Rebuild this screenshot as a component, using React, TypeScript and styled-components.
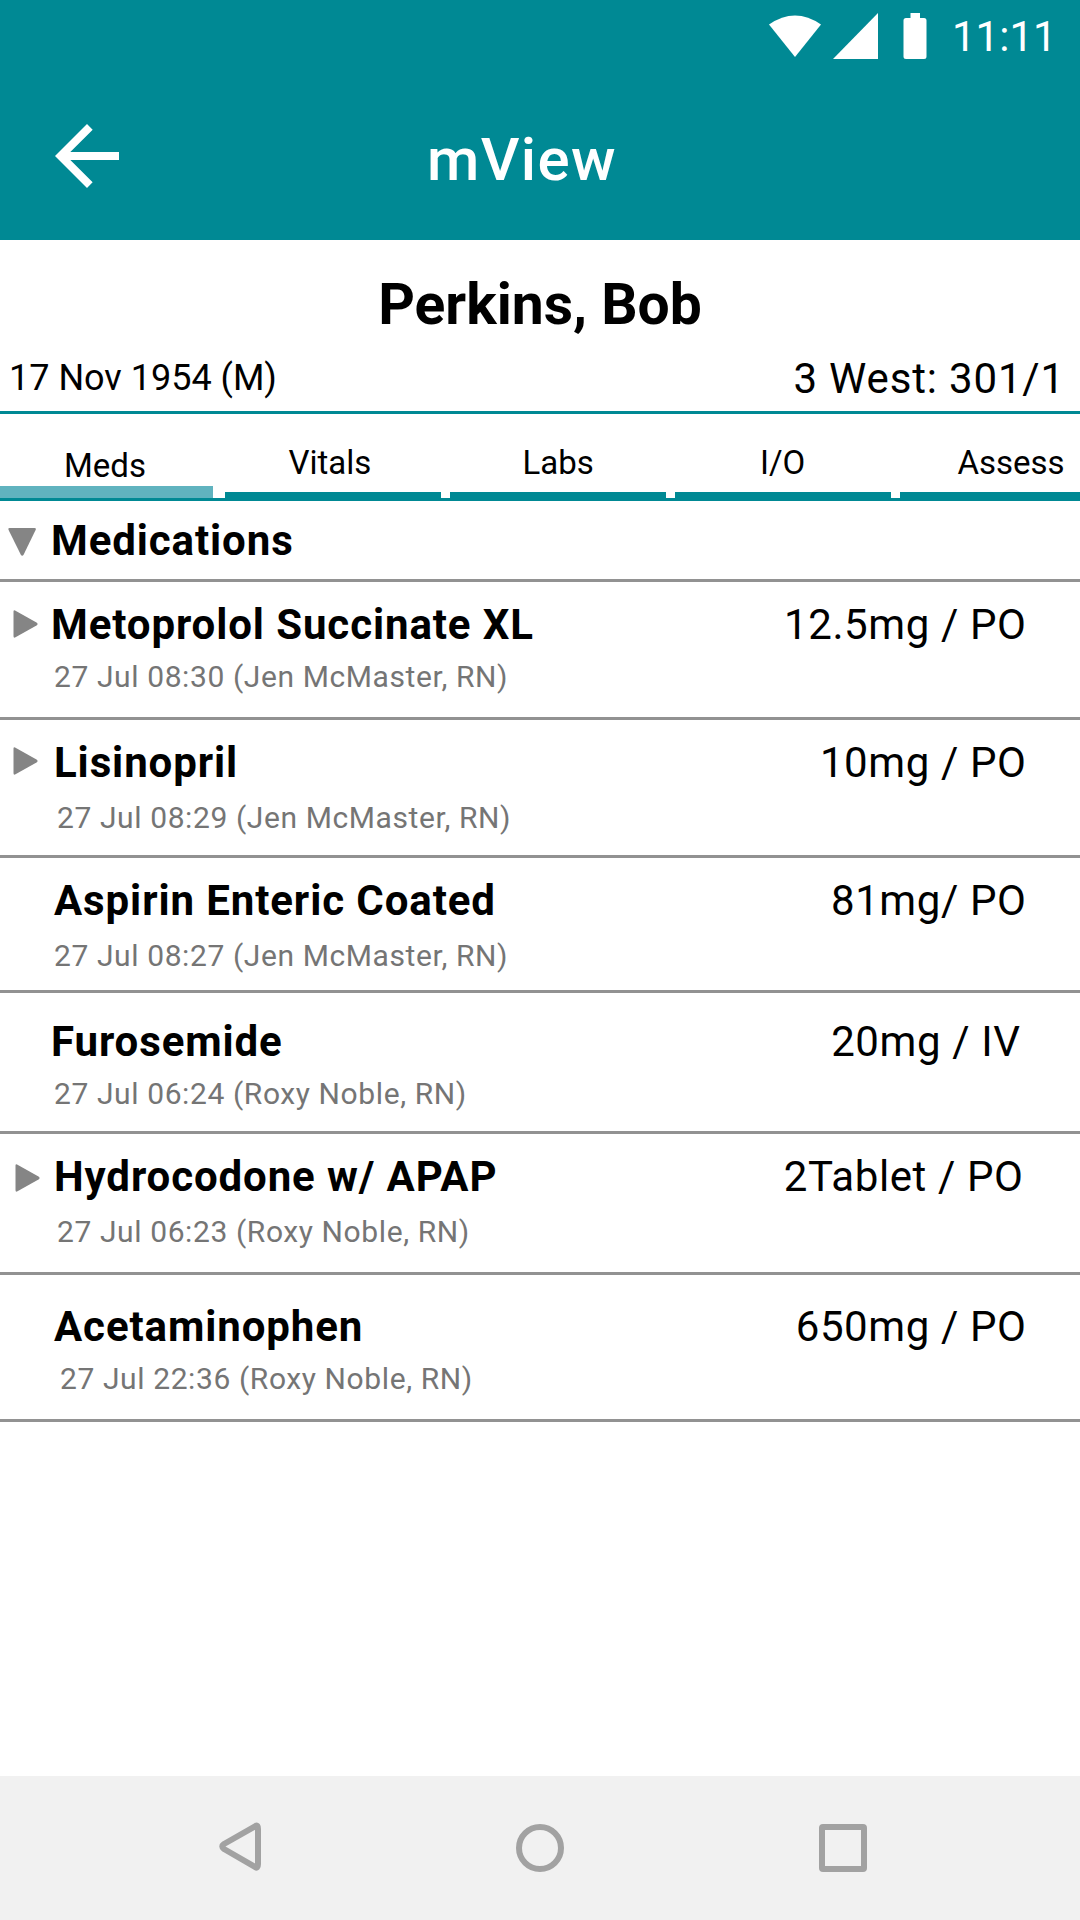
import React from 'react';
import styled, { createGlobalStyle } from 'styled-components';

const TEAL = '#008994';
const GREY = '#858585';

const GlobalStyle = createGlobalStyle`
  *, *::before, *::after { box-sizing: border-box; }
  html, body { margin: 0; padding: 0; background: #fff; }
  body { font-family: Roboto, sans-serif; color: #000; }
`;

const Screen = styled.div`
  width: 1080px;
  height: 1920px;
  display: flex;
  flex-direction: column;
  background: #fff;
  overflow: hidden;
  white-space: nowrap;
`;

const Header = styled.header`
  height: 240px;
  flex: none;
  background: ${TEAL};
  color: #fff;
`;

const StatusBar = styled.div`
  height: 72px;
  display: flex;
  align-items: flex-start;
  justify-content: flex-end;
  padding: 12px 28px 0 0;
`;

const StatusIcons = styled.svg`
  width: 160px;
  height: 48px;
  margin-right: 24px;
`;

const Clock = styled.time`
  margin-top: 1px;
  font-size: 42px;
  line-height: 48px;
  width: 100px;
`;

const TitleBar = styled.div`
  height: 168px;
  display: grid;
  grid-template-columns: 388px 1fr;
  padding: 36px 0 0 39px;
`;

const BackIcon = styled.svg`
  width: 96px;
  height: 96px;
`;

const Title = styled.h1`
  margin: 16px 0 0;
  font-size: 60px;
  font-weight: 500;
  line-height: 72px;
  letter-spacing: 1.4px;
`;

const Patient = styled.section`
  height: 174px;
  flex: none;
  border-bottom: 3px solid ${TEAL};
`;

const PatientName = styled.h2`
  margin: 0;
  padding-top: 32px;
  font-size: 57px;
  font-weight: 700;
  line-height: 66px;
  text-align: center;
`;

const PatientDetails = styled.div`
  display: flex;
  align-items: flex-start;
  justify-content: space-between;
  padding: 17px 15px 0 9px;
`;

const Birth = styled.span`
  font-size: 36px;
  line-height: 46px;
`;

const Location = styled.span`
  font-size: 42px;
  line-height: 48px;
  letter-spacing: 0.84px;
`;

const Tabs = styled.nav`
  height: 87px;
  flex: none;
  display: grid;
  grid-template-columns: 213px 216px 216px 216px 180px;
  column-gap: 9px;
  border-bottom: 3px solid ${TEAL};
`;

const Tab = styled.div<{ $active?: boolean; $inset: number }>`
  height: 84px;
  padding: ${(p) => (p.$active ? 32 : 29)}px 0 0 ${(p) => p.$inset}px;
  margin-left: ${(p) => (p.$active ? 0 : 3)}px;
  margin-right: ${(p) => (p.$active ? 0 : -3)}px;
  border-bottom: ${(p) => (p.$active ? `12px solid #60b3bf` : `6px solid ${TEAL}`)};
  font-size: 33px;
  line-height: 39px;
`;

const SectionHeader = styled.div`
  height: 81px;
  flex: none;
  display: grid;
  grid-template-columns: 51px 1fr;
  padding-top: 16px;
  border-bottom: 3px solid #929292;
`;

const Row = styled.article<{ $height: number; $top: number }>`
  height: ${(p) => p.$height}px;
  flex: none;
  display: grid;
  grid-template-columns: 51px 1fr auto;
  align-items: start;
  padding-top: ${(p) => p.$top}px;
  border-bottom: 3px solid #929292;
`;

const Arrow = styled.svg<{ $left: number; $top: number }>`
  width: 28px;
  height: 28px;
  margin: ${(p) => p.$top}px 0 0 ${(p) => p.$left}px;
`;

const Name = styled.h3<{ $indent?: number }>`
  margin: 0;
  padding-left: ${(p) => p.$indent ?? 0}px;
  font-size: 42px;
  font-weight: 700;
  line-height: 48px;
  letter-spacing: 0.9px;
`;

const Given = styled.p<{ $gap: number; $indent: number }>`
  margin: ${(p) => p.$gap}px 0 0;
  padding-left: ${(p) => p.$indent}px;
  font-size: 30px;
  line-height: 36px;
  letter-spacing: 0.6px;
  color: #757575;
`;

const Dose = styled.span<{ $right: number }>`
  padding-right: ${(p) => p.$right}px;
  font-size: 42px;
  line-height: 48px;
  letter-spacing: 0.6px;
`;

const NavBar = styled.footer`
  height: 144px;
  flex: none;
  margin-top: auto;
  background: #f1f1f1;
  display: grid;
  grid-template-columns: 300px 303px 54px;
  padding: 45px 0 0 213px;
`;

const NavIcon = styled.svg`
  width: 54px;
  height: 54px;
  fill: none;
  stroke: #a2a2a2;
  stroke-width: 6;
  stroke-linejoin: round;
`;

interface Medication {
  name: string;
  given: string;
  dose: string;
  height: number;
  top: number;
  gap: number;
  nameIndent: number;
  givenIndent: number;
  doseRight: number;
  arrow?: [number, number];
}

const medications: Medication[] = [
  { name: 'Metoprolol Succinate XL', given: '27 Jul 08:30 (Jen McMaster, RN)', dose: '12.5mg / PO', height: 138, top: 19, gap: 10, nameIndent: 0, givenIndent: 3, doseRight: 53.5, arrow: [12, 9] },
  { name: 'Lisinopril', given: '27 Jul 08:29 (Jen McMaster, RN)', dose: '10mg / PO', height: 138, top: 19, gap: 13, nameIndent: 3, givenIndent: 6, doseRight: 53.5, arrow: [12, 7.5] },
  { name: 'Aspirin Enteric Coated', given: '27 Jul 08:27 (Jen McMaster, RN)', dose: '81mg/ PO', height: 135, top: 19, gap: 13, nameIndent: 3, givenIndent: 3, doseRight: 53.5 },
  { name: 'Furosemide', given: '27 Jul 06:24 (Roxy Noble, RN)', dose: '20mg / IV', height: 141, top: 25, gap: 10, nameIndent: 0, givenIndent: 3, doseRight: 59.5 },
  { name: 'Hydrocodone w/ APAP', given: '27 Jul 06:23 (Roxy Noble, RN)', dose: '2Tablet / PO', height: 141, top: 19, gap: 13, nameIndent: 3, givenIndent: 6, doseRight: 56.5, arrow: [13.5, 10.5] },
  { name: 'Acetaminophen', given: '27 Jul 22:36 (Roxy Noble, RN)', dose: '650mg / PO', height: 147, top: 28, gap: 10, nameIndent: 3, givenIndent: 9, doseRight: 53.5 },
];

const tabs = [
  { label: 'Meds', inset: 64, active: true },
  { label: 'Vitals', inset: 63.5 },
  { label: 'Labs', inset: 72.5 },
  { label: 'I/O', inset: 85 },
  { label: 'Assess', inset: 57.5 },
];

export default function App() {
  return (
    <>
      <GlobalStyle />
      <Screen>
        <Header>
          <StatusBar>
            <StatusIcons viewBox="0 0 160 48" fill="#fff">
              <path d="M1 12.5Q27-5.500 53 12.500L27 45Z" />
              <path d="M65 47L110 1V47Z" />
              <path d="M142.500 1H152V6H156Q158.500 6 158.500 8.500V44.500Q158.500 47 156 47H138Q135.500 47 135.500 44.500V8.500Q135.500 6 138 6H142.500Z" />
            </StatusIcons>
            <Clock>11:11</Clock>
          </StatusBar>
          <TitleBar>
            <BackIcon viewBox="0 0 24 24" fill="#fff">
              <path d="M20 11H7.830l5.590-5.590L12 4l-8 8 8 8 1.410-1.410L7.830 13H20v-2z" />
            </BackIcon>
            <Title>mView</Title>
          </TitleBar>
        </Header>
        <Patient>
          <PatientName>Perkins, Bob</PatientName>
          <PatientDetails>
            <Birth>17 Nov 1954 (M)</Birth>
            <Location>3 West: 301/1</Location>
          </PatientDetails>
        </Patient>
        <Tabs>
          {tabs.map((t) => (
            <Tab key={t.label} $active={t.active} $inset={t.inset}>
              {t.label}
            </Tab>
          ))}
        </Tabs>
        <SectionHeader>
          <Arrow $left={8} $top={11} viewBox="0 0 28 28" fill={GREY}>
            <path d="M1.500 0H26.500Q28.500 0 27.600 2L15.700 26.500Q14.200 29 12.700 26.500L.6 2Q-.2 0 1.500 0Z" />
          </Arrow>
          <Name>Medications</Name>
        </SectionHeader>
        {medications.map((m) => (
          <Row key={m.name} $height={m.height} $top={m.top}>
            {m.arrow ? (
              <Arrow $left={m.arrow[0]} $top={m.arrow[1]} viewBox="0 0 28 28" fill={GREY}>
                <path d="M1.500 1.800Q1.500-.4 3.500 .7L24.500 12.500Q26.700 14 24.500 15.500L3.500 27.300Q1.500 28.400 1.500 26.200Z" />
              </Arrow>
            ) : (
              <span />
            )}
            <div>
              <Name $indent={m.nameIndent}>{m.name}</Name>
              <Given $gap={m.gap} $indent={m.givenIndent}>
                {m.given}
              </Given>
            </div>
            <Dose $right={m.doseRight}>{m.dose}</Dose>
          </Row>
        ))}
        <NavBar>
          <NavIcon viewBox="0 0 54 54">
            <path d="M42.500 5Q45 3.500 45 8V43Q45 48 42 46L11 28Q7.500 25.500 11 23Z" />
          </NavIcon>
          <NavIcon viewBox="0 0 54 54">
            <circle cx="27" cy="27" r="21" />
          </NavIcon>
          <NavIcon viewBox="0 0 54 54">
            <rect x="6" y="6" width="42" height="42" rx="1" />
          </NavIcon>
        </NavBar>
      </Screen>
    </>
  );
}
